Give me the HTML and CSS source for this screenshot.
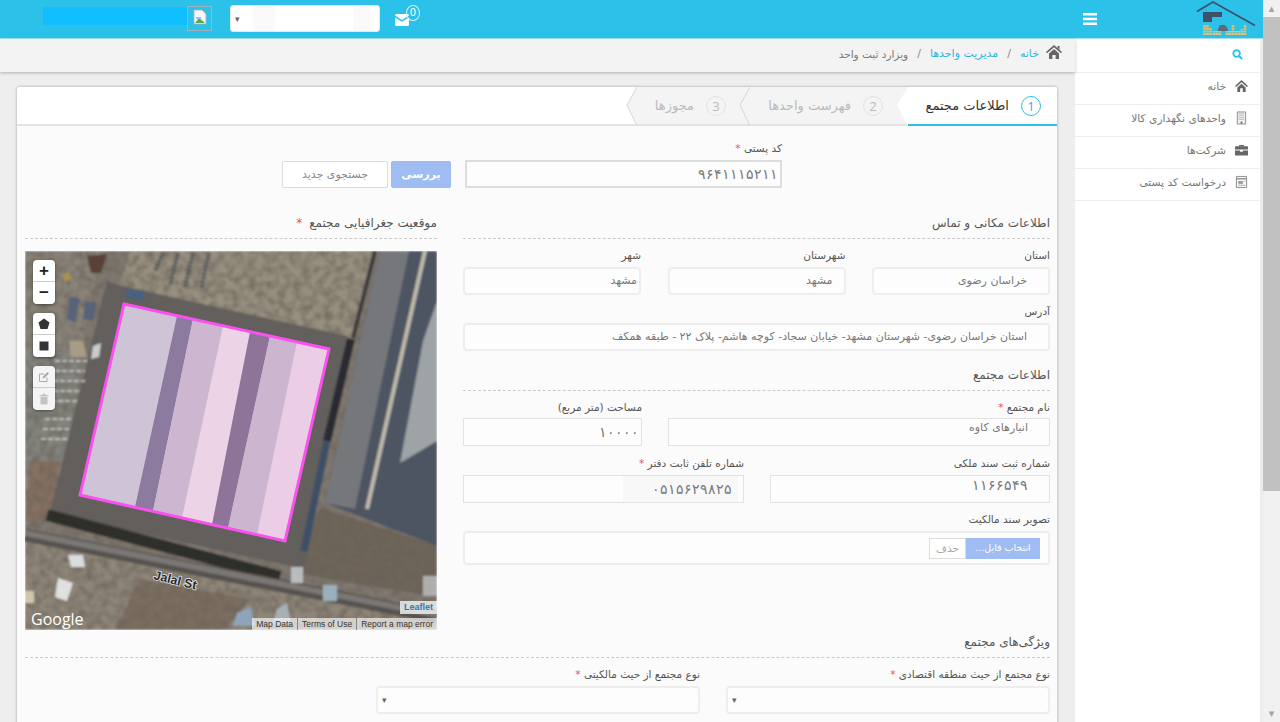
FILE: index.html
```html
<!DOCTYPE html>
<html lang="fa" dir="rtl">
<head>
    <meta charset="UTF-8">
    <title>ویزارد ثبت واحد</title>
    <link rel="stylesheet" href="styles.css">
</head>
<body>
    <!-- window scrollbar -->
    <div class="scrollbar">
        <span class="scroll-arrow">▴</span>
        <div class="scroll-thumb"></div>
        <span class="scroll-arrow scroll-arrow-down">▾</span>
    </div>

    <div class="shell">
        <header class="topbar">
            <div class="topbar-right">
                <svg class="logo" viewBox="0 0 60 36">
                    <path d="M1 10.500 L17 1 L59 24.500" fill="none" stroke="#3f5069" stroke-width="1.600"/>
                    <path d="M7 11 H26 V16 H16 V21 H7 Z" fill="#3f5069"/>
                    <g fill="none" stroke="#e6c06a" stroke-width="2.700" stroke-dasharray="2 .6">
                        <path d="M8.500 34 V24 M11.500 34 V24 M14.500 34 V27 M18 34 V30 M21 34 V30 M24 34 V30"/>
                        <path d="M31 34 V30 M34 34 V30 M37 34 V24 M40 34 V30 M43 34 V30 M46 34 V28 M49 34 V24"/>
                    </g>
                    <path d="M22 28 L24 24 H29 L32 28 V30 H22 Z" fill="#5e6a78"/>
                </svg>
                <svg class="menu-icon" viewBox="0 0 14 12"><path d="M0 0H14V2.600H0ZM0 4.700H14V7.300H0ZM0 9.400H14V12H0Z" fill="#fff"/></svg>
            </div>
            <div class="topbar-left">
                <div class="mail">
                    <svg class="mail-icon" viewBox="0 0 14 12"><path d="M0 1.500 Q0 0 1.500 0 H12.500 Q14 0 14 1.500 L7 6 L0 1.500Z M0 3.400 L7 7.800 L14 3.400 V10.500 Q14 12 12.500 12 H1.500 Q0 12 0 10.500Z" fill="#fff"/></svg>
                    <span class="mail-badge">0</span>
                </div>
                <div class="top-select"><span class="caret">▾</span></div>
                <div class="avatar">
                    <svg class="broken-img" viewBox="0 0 14 16">
                        <path d="M1 1H9L13 5V15H1Z" fill="#f4f6f8" stroke="#a9b0b5" stroke-width=".8"/>
                        <path d="M2 14 L6 9 L12 14Z" fill="#5ba846"/>
                        <path d="M3 8H8V10H3Z" fill="#9dc0ea"/>
                    </svg>
                </div>
                <div class="user-bar"></div>
            </div>
        </header>

        <div class="layout">
            <nav class="sidebar">
                <div class="side-search">
                    <svg class="side-search-icon" viewBox="0 0 12 12"><circle cx="5" cy="5" r="3.600" fill="none" stroke="#2bc1e9" stroke-width="2"/><path d="M7.800 7.800 L11 11" stroke="#2bc1e9" stroke-width="2.200"/></svg>
                </div>
                <a class="side-item">
                    <svg class="side-icon" viewBox="0 0 14 13"><path d="M7 0 L14 6.500 L12.800 7.600 L7 2.400 L1.200 7.600 L0 6.500Z M2.500 8 L7 4 L11.500 8 V13 H8.400 V9 H5.600 V13 H2.500Z" fill="#666"/></svg>
                    خانه
                </a>
                <a class="side-item">
                    <svg class="side-icon" viewBox="0 0 14 14"><path d="M2.500 .5H11.500V13.500H2.500Z" fill="#f2f2f2" stroke="#888"/><path d="M4 2.500H10M4 4.500H10M4 6.500H10M4 8.500H10" stroke="#bbb"/><path d="M6 11H8V13H6Z" fill="#666"/></svg>
                    واحدهای نگهداری کالا
                </a>
                <a class="side-item">
                    <svg class="side-icon" viewBox="0 0 14 12"><path d="M4.500 2V.5H9.500V2H13Q14 2 14 3V5.500H0V3Q0 2 1 2ZM5.800 1.600V2H8.200V1.600ZM0 6.500H5.500V8H8.500V6.500H14V11Q14 12 13 12H1Q0 12 0 11Z" fill="#666"/></svg>
                    شرکت‌ها
                </a>
                <a class="side-item">
                    <svg class="side-icon" viewBox="0 0 14 13"><path d="M1.500 .5H12.500V12.500H1.500Z" fill="#f6f6f6" stroke="#888"/><path d="M1.500 3H12.500" stroke="#888" stroke-width="1.400"/><path d="M3.500 5.500H8.500V8.500H3.500Z" fill="#999"/><path d="M9.500 5.500H11M3.500 10H11" stroke="#aaa"/></svg>
                    درخواست کد پستی
                </a>
            </nav>

            <main class="main">
                <div class="breadcrumb">
                    <svg class="crumb-home" viewBox="0 0 16 14"><path d="M8 0 L16 7 L15 8.200 L8 2.200 L1 8.200 L0 7Z M3 8.400 L8 4 L13 8.400 V14 H9.600 V10 H6.400 V14 H3Z M11.500 1H13.500V4.500L11.500 2.800Z" fill="#666"/></svg>
                    <a class="crumb-link">خانه</a>
                    <span class="crumb-sep">/</span>
                    <a class="crumb-link">مدیریت واحدها</a>
                    <span class="crumb-sep">/</span>
                    <span class="crumb-current">ویزارد ثبت واحد</span>
                </div>

                <div class="content">
                    <div class="card">
                        <div class="tabs">
                            <div class="tab tab-active">
                                <svg class="tab-point" viewBox="0 0 11 39"><path d="M11 0 L0 18 L11 39Z" fill="#fff"/></svg>
                                <span class="tab-num">1</span>
                                <span>اطلاعات مجتمع</span>
                            </div>
                            <div class="tab tab-second">
                                <svg class="tab-point" viewBox="0 0 11 39"><path d="M11 0 L1 18 L11 39" fill="#f4f4f4" stroke="#d5d5d5"/></svg>
                                <span class="tab-num">2</span>
                                <span>فهرست واحدها</span>
                            </div>
                            <div class="tab tab-third">
                                <svg class="tab-point" viewBox="0 0 11 39"><path d="M11 0 L1 18 L11 39" fill="#f4f4f4" stroke="#d5d5d5"/></svg>
                                <span class="tab-num">3</span>
                                <span>مجوزها</span>
                            </div>
                        </div>

                        <div class="card-body">
                            <div class="code-row">
                                <div class="field code-field">
                                    <label>کد پستی <span class="req">*</span></label>
                                    <div class="control control-square control-thick pad-xs digits">۹۶۴۱۱۱۵۲۱۱</div>
                                </div>
                                <button class="btn btn-primary">بررسی</button>
                                <button class="btn btn-plain">جستجوی جدید</button>
                            </div>

                            <div class="columns">
                                <section class="col-form">
                                    <h3 class="section-title">اطلاعات مکانی و تماس</h3>
                                    <div class="grid grid-3">
                                        <div class="field">
                                            <label>استان</label>
                                            <div class="control pad-lg">خراسان رضوی</div>
                                        </div>
                                        <div class="field">
                                            <label>شهرستان</label>
                                            <div class="control pad-md">مشهد</div>
                                        </div>
                                        <div class="field">
                                            <label>شهر</label>
                                            <div class="control pad-xs">مشهد</div>
                                        </div>
                                    </div>
                                    <div class="field">
                                        <label>آدرس</label>
                                        <div class="control pad-lg">استان خراسان رضوی- شهرستان مشهد- خیابان سجاد- کوچه هاشم- پلاک ۲۲ - طبقه همکف</div>
                                    </div>

                                    <h3 class="section-title section-title-next">اطلاعات مجتمع</h3>
                                    <div class="grid grid-name">
                                        <div class="field">
                                            <label>نام مجتمع <span class="req">*</span></label>
                                            <div class="control control-square pad-lg text-high">انبارهای کاوه</div>
                                        </div>
                                        <div class="field">
                                            <label>مساحت (متر مربع)</label>
                                            <div class="control control-square pad-xs digits">۱۰۰۰۰</div>
                                        </div>
                                    </div>
                                    <div class="grid grid-half">
                                        <div class="field">
                                            <label>شماره ثبت سند ملکی</label>
                                            <div class="control control-square pad-lg digits text-high">۱۱۶۶۵۴۹</div>
                                        </div>
                                        <div class="field">
                                            <label>شماره تلفن ثابت دفتر <span class="req">*</span></label>
                                            <div class="control control-square pad-md digits phone">۰۵۱۵۶۲۹۸۲۵</div>
                                        </div>
                                    </div>
                                    <div class="field">
                                        <label>تصویر سند مالکیت</label>
                                        <div class="control file-box">
                                            <span class="file-pick">انتخاب فایل...</span>
                                            <span class="file-remove">حذف</span>
                                        </div>
                                    </div>
                                </section>

                                <section class="col-map">
                                    <h3 class="section-title">موقعیت جغرافیایی مجتمع <span class="req req-far">*</span></h3>
                                    <div class="map">
                                        <svg class="map-img" viewBox="0 0 412 379" preserveAspectRatio="none">
                                            <defs>
                                                <filter id="soft"><feGaussianBlur stdDeviation="1"/></filter>
                                                <filter id="grain" x="0" y="0" width="100%" height="100%">
                                                    <feTurbulence type="fractalNoise" baseFrequency=".13" numOctaves="3" seed="7"/>
                                                    <feColorMatrix values="0 0 0 0 .14  0 0 0 0 .12  0 0 0 0 .1  1.500 0 0 0 -.5"/>
                                                </filter>
                                            </defs>
                                            <g filter="url(#soft)">
                                                <rect width="412" height="379" fill="#7f786f"/>
                                                <!-- yard top -->
                                                <path d="M105 0H352L328 87L295 82L95 34Z" fill="#98907f"/>
                                                <!-- lots left -->
                                                <path d="M0 0H75L55 110L20 262L0 275Z" fill="#8a847a"/>
                                                <path d="M0 100H60L36 225H0Z" fill="#84847f"/>
                                                <path d="M5 210H35L28 270H0Z" fill="#86705f"/>
                                                <!-- bottom ground -->
                                                <path d="M0 290L412 372V379H0Z" fill="#8f8678"/>
                                                <path d="M115 328L225 348L200 379H90Z" fill="#7c6e5f"/>
                                                <path d="M295 257L412 295V346L268 322Z" fill="#6e6558"/>
                                                <rect width="412" height="379" filter="url(#grain)"/>
                                                <!-- dark ground round the building -->
                                                <path d="M82 30L92 34L322 85L280 318L25 262Z" fill="#625e5b"/>
                                                <!-- sheds on the right -->
                                                <path d="M355 0H412V295L300 252Z" fill="#4d5463"/>
                                                <path d="M355 0H384L330 258L300 252Z" fill="#76777a"/>
                                                <path d="M412 50V190L375 212L398 90Z" fill="#9ea3a6"/>
                                                <path d="M400 0L342 258" stroke="#c0baab" stroke-width="4"/>
                                                <!-- trees -->
                                                <path d="M350 0L328 87" fill="none" stroke="#3a3a3a" stroke-width="4"/>
                                                <path d="M326 88L302 190" fill="none" stroke="#2b2c30" stroke-width="8"/>
                                                <path d="M302 190L279 300" fill="none" stroke="#3d5066" stroke-width="7"/>
                                                <path d="M22 264L255 326" stroke="#2f2d2c" stroke-width="12"/>
                                                <!-- road -->
                                                <path d="M0 284L412 366" stroke="#55524f" stroke-width="13"/>
                                                <path d="M0 282L412 364" stroke="#7a7774" stroke-width="6"/>
                                                <!-- small light blocks -->
                                                <path d="M33 327L48 332L42 350L30 346Z" fill="#dfe1e0"/>
                                                <path d="M43 304H58L60 316H46Z" fill="#d9dde0"/>
                                                <path d="M0 340H9V352H0Z" fill="#cfc8a8"/>
                                                <path d="M266 316H278V332H266Z" fill="#b9bcbc"/>
                                                <path d="M298 334H312V350H298Z" fill="#9cb0bc"/>
                                                <path d="M398 325H412V345H398Z" fill="#aeafad"/>
                                                <path d="M212 362L226 356L230 375H208Z" fill="#8fa4b8"/>
                                                <path d="M252 358L262 352L266 372H248Z" fill="#a8b0b6"/>
                                                <path d="M68 95L76 92L74 106L66 108Z" fill="#c9ccce"/>
                                                <path d="M44 90H58L62 106H46Z" fill="#a99c86"/>
                                                <path d="M37 23L44 21L47 28L40 31Z" fill="#a7924f"/>
                                                <path d="M62 5L82 3L76 22L66 22Z" fill="#5a3f35"/>
                                                <path d="M45 45L55 48L50 72L42 68ZM60 50L72 52L68 70L58 68Z" fill="#566478"/>
                                                <path d="M100 38L118 40L120 50L102 46Z" fill="#47627e"/>
                                                <g fill="none" stroke="#d3d3cf" stroke-width="1.500" stroke-dasharray="5 2">
                                                    <path d="M30 110H62M30 120H60M28 130H60M28 140H56M26 150H54M20 168H48M18 178H46M16 188H44"/>
                                                </g>
                                                <g stroke="#55585c" stroke-width="4" stroke-dasharray="3 1">
                                                    <path d="M138 2L130 20M153 2L145 34M168 2L160 36M184 2L176 38"/>
                                                </g>
                                            </g>
                                            <!-- drawn area -->
                                            <path d="M99 53L304 98L260 290L55 244Z" fill="#cfc4d6"/>
                                            <path d="M152 65L168 68L128 260L110 256Z" fill="#8c7a9f"/>
                                            <path d="M168 68L198 75L157 267L128 260Z" fill="#cdb7d0"/>
                                            <path d="M198 75L225 81L187 274L157 267Z" fill="#ecd3e6"/>
                                            <path d="M225 81L245 85L203 277L187 274Z" fill="#8e7499"/>
                                            <path d="M245 85L272 91L232 284L203 277Z" fill="#cbb5cf"/>
                                            <path d="M272 91L304 98L260 290L232 284Z" fill="#ebcde5"/>
                                            <path d="M99 53L304 98L260 290L55 244Z" fill="none" stroke="#fb50f0" stroke-width="3"/>
                                            <text class="street" x="128" y="328" transform="rotate(14 128 328)">Jalal St</text>
                                        </svg>

                                        <div class="map-tools">
                                            <div class="tool-group">
                                                <span class="tool tool-zoom">+</span>
                                                <span class="tool tool-zoom">−</span>
                                            </div>
                                            <div class="tool-group">
                                                <span class="tool"><svg class="tool-icon" viewBox="0 0 12 12"><path d="M6 .5L11.500 4.500L9.500 11H2.500L.5 4.500Z" fill="#333"/></svg></span>
                                                <span class="tool"><svg class="tool-icon" viewBox="0 0 12 12"><path d="M1.500 1.500H10.500V10.500H1.500Z" fill="#333"/></svg></span>
                                            </div>
                                            <div class="tool-group tool-group-off">
                                                <span class="tool"><svg class="tool-icon" viewBox="0 0 12 12"><path d="M9 6.500V10.500H1.500V3H6" fill="none" stroke="#aaa"/><path d="M4.500 7.500L5 5.500L9.500 1L11 2.500L6.500 7Z" fill="#aaa"/></svg></span>
                                                <span class="tool"><svg class="tool-icon" viewBox="0 0 12 12"><path d="M2.500 3.500H9.500V11.500H2.500ZM1.500 2H10.500V3H1.500ZM4.500 .7H7.500V2H4.500Z" fill="#c4c4c4"/></svg></span>
                                            </div>
                                        </div>

                                        <span class="google">Google</span>
                                        <div class="map-credits" dir="ltr">
                                            <a class="leaflet">Leaflet</a>
                                            <div class="map-links">
                                                <span>Map Data</span>
                                                <span>Terms of Use</span>
                                                <span>Report a map error</span>
                                            </div>
                                        </div>
                                    </div>
                                </section>
                            </div>

                            <h3 class="section-title section-title-wide">ویژگی‌های مجتمع</h3>
                            <div class="grid grid-wide">
                                <div class="field">
                                    <label>نوع مجتمع از حیث منطقه اقتصادی <span class="req">*</span></label>
                                    <div class="control select-control"><span class="caret">▾</span></div>
                                </div>
                                <div class="field">
                                    <label>نوع مجتمع از حیث مالکیتی <span class="req">*</span></label>
                                    <div class="control select-control"><span class="caret">▾</span></div>
                                </div>
                            </div>
                        </div>
                    </div>
                </div>
            </main>
        </div>
    </div>
</body>
</html>
```

FILE: styles.css
```css
* {
    box-sizing: border-box;
}

html, body {
    height: 100%;
}

body {
    margin: 0;
    display: flex;
    height: 722px;
    overflow: hidden;
    background-color: #eeeeee;
    font-family: "DejaVu Sans", sans-serif;
    font-size: 11px;
    color: #666;
}

/* scrollbar */
.scrollbar {
    width: 17px;
    flex: none;
    display: flex;
    flex-direction: column;
    align-items: center;
    background-color: #f1f1f1;
}

.scroll-arrow {
    height: 17px;
    line-height: 17px;
    font-size: 11px;
    color: #a3a3a3;
}

.scroll-thumb {
    width: 100%;
    height: 474px;
    background-color: #c1c1c1;
}

.scroll-arrow-down {
    margin-top: auto;
}

.shell {
    flex: 1;
    min-width: 0;
    display: flex;
    flex-direction: column;
}

/* top bar */
.topbar {
    height: 39px;
    flex: none;
    display: flex;
    justify-content: space-between;
    background-color: #2bc1e9;
    border-bottom: 1px solid #a5e3f4;
}

.topbar-right {
    display: flex;
    align-items: center;
    padding-right: 7px;
}

.logo {
    width: 60px;
    height: 36px;
}

.menu-icon {
    width: 14px;
    height: 12px;
    margin-right: 99px;
}

.topbar-left {
    display: flex;
    align-items: flex-start;
    padding-left: 43px;
}

.mail {
    position: relative;
    width: 40px;
    height: 14px;
    margin-top: 14px;
}

.mail-icon {
    display: block;
    width: 14px;
    height: 12px;
    margin-right: 11px;
}

.mail-badge {
    position: absolute;
    top: -9px;
    right: 0;
    width: 14px;
    height: 16px;
    border: 1px solid #d4f3fb;
    border-radius: 50%;
    color: #fff;
    font-size: 10px;
    line-height: 14px;
    text-align: center;
}

.top-select {
    width: 150px;
    height: 27px;
    margin-top: 5px;
    margin-left: 18px;
    padding-left: 4px;
    display: flex;
    align-items: center;
    justify-content: flex-end;
    background: linear-gradient(to left, #fff 0, #fff 8px, #fafafa 8px, #fafafa 26px, #fff 26px, #fff 104px, #fafafa 104px, #fafafa 126px, #fff 126px);
    border: 1px solid #d8edf3;
    border-radius: 3px;
}

.caret {
    font-size: 9px;
    color: #666;
}

.avatar {
    width: 25px;
    height: 25px;
    margin-top: 6px;
    display: flex;
    align-items: flex-start;
    justify-content: center;
    padding-top: 2px;
    border: 1px solid #9fb4ba;
}

.broken-img {
    width: 14px;
    height: 16px;
}

.user-bar {
    width: 144px;
    height: 18px;
    margin-top: 7px;
    background-color: #0fbfff;
}

.layout {
    flex: 1;
    min-height: 0;
    display: flex;
}

/* sidebar */
.sidebar {
    width: 188px;
    flex: none;
    background-color: #fff;
    border-right: 3px solid #ececec;
}

.side-search {
    height: 34px;
    padding-right: 17px;
    padding-bottom: 3px;
    display: flex;
    align-items: center;
    border-bottom: 1px solid #eee;
}

.side-search-icon {
    width: 11px;
    height: 11px;
}

.side-item {
    height: 32px;
    padding-right: 12px;
    padding-bottom: 5px;
    display: flex;
    align-items: center;
    gap: 9px;
    border-bottom: 1px solid #eee;
    color: #777;
    font-size: 10.700px;
}

.side-icon {
    width: 13px;
    height: 14px;
    flex: none;
}

/* breadcrumb */
.main {
    flex: 1;
    min-width: 0;
    display: flex;
    flex-direction: column;
}

.breadcrumb {
    height: 33px;
    flex: none;
    padding: 0 13px 4px 0;
    display: flex;
    align-items: center;
    gap: 7px;
    background-color: #f3f3f3;
    box-shadow: 0 1px 3px rgba(0, 0, 0, 0.25);
    font-size: 11px;
    color: #777;
}

.crumb-home {
    width: 16px;
    height: 14px;
    margin-bottom: 3px;
}

.crumb-link {
    color: #2bb7de;
}

.crumb-sep {
    margin: 0 2px;
    color: #888;
}

.crumb-current {
    font-size: 10.500px;
}

.content {
    flex: 1;
    min-height: 0;
    padding: 15px 18px 0 17px;
}

/* card and wizard tabs */
.card {
    background-color: #fbfbfb;
    border-radius: 3px 3px 0 0;
    box-shadow: 0 0 3px rgba(0, 0, 0, 0.35);
    height: 640px;
}

.tabs {
    height: 39px;
    display: flex;
    background-color: #fff;
    border-bottom: 2px solid #e4e4e4;
    border-radius: 3px 3px 0 0;
}

.tab {
    position: relative;
    height: 39px;
    padding-right: 16px;
    display: flex;
    align-items: center;
    gap: 12px;
    font-size: 13px;
    color: #bbb;
    background-color: #f4f4f4;
}

.tab-active {
    width: 149px;
    color: #333;
    background-color: #fff;
    border-bottom: 2px solid #2bc1e9;
    border-top-right-radius: 3px;
}

.tab-second {
    width: 158px;
    padding-right: 25px;
}

.tab-third {
    width: 113px;
    padding-right: 24px;
}

.tab-point {
    position: absolute;
    top: 0;
    left: -11px;
    width: 11px;
    height: 39px;
    z-index: 1;
}

.tab-second, .tab-third {
    border-bottom: 2px solid #e4e4e4;
}

.tab-num {
    width: 20px;
    height: 20px;
    flex: none;
    border: 1px solid #e2e2e2;
    border-radius: 50%;
    text-align: center;
    line-height: 18px;
    font-family: "Open Sans", sans-serif;
    font-size: 13px;
}

.tab-active .tab-num {
    border-color: #2bc1e9;
    color: #2bb7de;
}

.card-body {
    padding: 15px 7px 0 8px;
}

/* fields */
.code-row {
    display: flex;
    align-items: flex-end;
    padding-right: 268px;
}

.field {
    margin-bottom: 9px;
}

.code-field {
    width: 317px;
    margin-left: 14px;
    margin-bottom: 0;
}

.field label {
    display: block;
    height: 14px;
    margin-bottom: 5px;
    line-height: 14px;
    font-size: 10.500px;
    color: #555;
}

.req {
    color: #e8505b;
}

.req-far {
    margin-right: 3px;
}

.control {
    height: 28px;
    line-height: 24px;
    background-color: #fdfdfd;
    border: 2px solid #eee;
    border-radius: 4px;
    font-size: 11px;
    color: #777;
    white-space: nowrap;
    overflow: hidden;
}

.control-square {
    border-width: 1px;
    border-color: #e2e2e2;
    border-radius: 0;
    line-height: 26px;
}

.control-thick {
    border-width: 2px;
    border-color: #ddd;
    line-height: 24px;
}

.pad-xs {
    padding-right: 2px;
}

.pad-md {
    padding-right: 11px;
}

.pad-lg {
    padding-right: 21px;
}

.digits {
    font-size: 14.400px;
    font-weight: 300;
}

.text-high {
    line-height: 18px;
}

.phone {
    background: linear-gradient(to left, #fdfdfd 5px, #f8f8f8 5px, #f8f8f8 120px, #fdfdfd 120px);
}

.btn {
    height: 27px;
    padding: 0;
    font-family: inherit;
    font-size: 11px;
    border-radius: 2px;
}

.btn-primary {
    width: 60px;
    margin-left: 3px;
    background-color: #9fbdf3;
    border: 1px solid #9fbdf3;
    color: #fff;
    font-weight: bold;
}

.btn-plain {
    width: 106px;
    background-color: #fff;
    border: 1px solid #ddd;
    color: #888;
}

.columns {
    display: grid;
    grid-template-columns: 587px 412px;
    gap: 26px;
    margin-top: 25px;
}

.section-title {
    height: 26px;
    margin: 0 0 9px;
    padding-bottom: 5px;
    line-height: 20px;
    font-size: 12px;
    font-weight: normal;
    color: #555;
    border-bottom: 1px dashed #c9c9c9;
}

.section-title-next {
    margin-top: 14px;
}

.section-title-wide {
    margin-top: 2px;
}

.grid {
    display: grid;
}

.grid-3 {
    grid-template-columns: repeat(3, 178px);
    justify-content: space-between;
}

.grid-name {
    grid-template-columns: 382px 179px;
    justify-content: space-between;
}

.grid-name .field {
    margin-bottom: 10px;
}

.grid-name .field label {
    margin-bottom: 4px;
}

.grid-half {
    grid-template-columns: 280px 281px;
    justify-content: space-between;
}

.grid-wide {
    grid-template-columns: repeat(3, 324px);
    gap: 26px;
}

.file-box {
    height: 34px;
    padding: 5px 8px 0 0;
    display: flex;
    align-items: flex-start;
    font-size: 9.500px;
}

.file-pick {
    width: 74px;
    height: 21px;
    line-height: 20px;
    text-align: center;
    background-color: #9fbdf3;
    color: #fff;
}

.file-remove {
    width: 37px;
    height: 21px;
    line-height: 18px;
    text-align: center;
    background-color: #fff;
    border: 1px solid #ddd;
    color: #aaa;
    font-size: 10.500px;
}

.select-control {
    display: flex;
    align-items: center;
    justify-content: flex-end;
    padding-left: 4px;
}

/* map */
.col-map {
    min-width: 0;
}

.map {
    position: relative;
    height: 379px;
    margin-top: 12px;
    overflow: hidden;
    direction: ltr;
}

.map-img {
    display: block;
    width: 100%;
    height: 100%;
}

.street {
    font-family: "Liberation Sans", sans-serif;
    font-size: 12.500px;
    font-weight: bold;
    fill: #2a2a2a;
    stroke: #e8e8e8;
    stroke-width: 1.500;
    paint-order: stroke;
}

.map-tools {
    position: absolute;
    top: 9px;
    left: 8px;
    display: flex;
    flex-direction: column;
    gap: 9px;
}

.tool-group {
    width: 22px;
    background-color: #fff;
    border-radius: 4px;
    box-shadow: 0 1px 3px rgba(0, 0, 0, 0.45);
}

.tool-group-off {
    background-color: #f4f4f4;
}

.tool {
    display: flex;
    align-items: center;
    justify-content: center;
    height: 22px;
    border-bottom: 1px solid #ccc;
}

.tool:last-child {
    border-bottom: none;
}

.tool-zoom {
    font-family: "Liberation Sans", sans-serif;
    font-size: 17px;
    font-weight: bold;
    color: #222;
}

.tool-icon {
    width: 12px;
    height: 12px;
}

.google {
    position: absolute;
    left: 6px;
    bottom: 0;
    font-family: "Open Sans", sans-serif;
    font-size: 16px;
    line-height: 22px;
    color: #fff;
}

.map-credits {
    position: absolute;
    right: 0;
    bottom: 0;
    display: flex;
    flex-direction: column;
    align-items: flex-end;
    gap: 4px;
    font-family: "Liberation Sans", sans-serif;
}

.leaflet {
    padding: 0 4px;
    height: 13px;
    line-height: 13px;
    font-size: 9px;
    font-weight: bold;
    color: #1f7fb5;
    background-color: rgba(255, 255, 255, 0.75);
}

.map-links {
    display: flex;
    height: 12px;
    line-height: 12px;
    font-size: 8.500px;
    color: #333;
    background-color: rgba(255, 255, 255, 0.65);
}

.map-links span {
    padding: 0 4px;
    border-right: 1px solid #888;
}

.map-links span:last-child {
    border-right: none;
}
```
